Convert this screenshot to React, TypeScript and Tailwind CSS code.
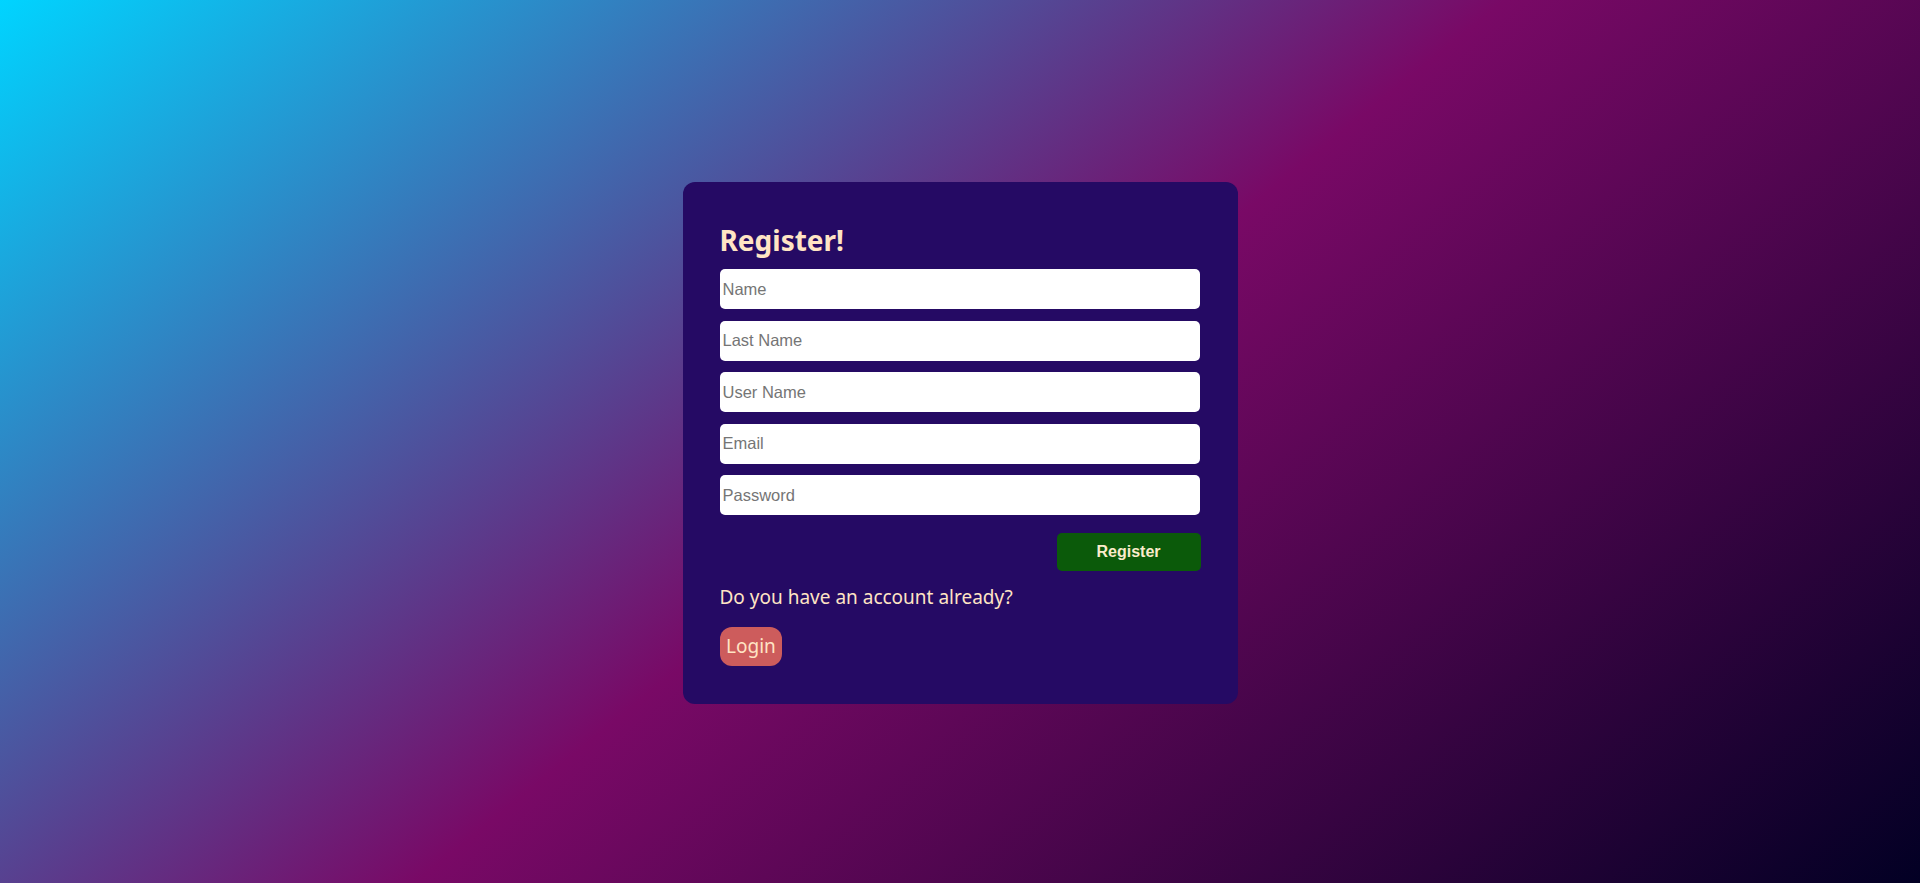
import { useState } from "react";

type Field = {
  name: string;
  placeholder: string;
  type: string;
};

const fields: Field[] = [
  { name: "name", placeholder: "Name", type: "text" },
  { name: "lastName", placeholder: "Last Name", type: "text" },
  { name: "userName", placeholder: "User Name", type: "text" },
  { name: "email", placeholder: "Email", type: "email" },
  { name: "password", placeholder: "Password", type: "password" },
];

const App = () => {
  const [values, setValues] = useState<Record<string, string>>({});

  return (
    <div className="flex min-h-screen w-full items-center justify-center bg-[linear-gradient(141deg,#00d4ff_0%,#790966_50%,#020024_100%)] pt-[3px] font-['Segoe_UI','Noto_Sans',sans-serif]">
      <div className="w-[555px] rounded-xl bg-[#250a64] px-[37px] pt-[40px] pb-[38px]">
        <h1 className="mb-[11px] text-[28px] leading-[36px] font-bold text-[#ffe4c4]">
          Register!
        </h1>
        <form className="flex flex-col" onSubmit={(e) => e.preventDefault()}>
          <div className="flex flex-col gap-[11.5px]">
            {fields.map((f) => (
              <input
                key={f.name}
                type={f.type}
                placeholder={f.placeholder}
                value={values[f.name] ?? ""}
                onChange={(e) =>
                  setValues({ ...values, [f.name]: e.target.value })
                }
                className="h-10 w-[480px] rounded-[5px] bg-white pl-[3px] font-['Liberation_Sans',Arial,sans-serif] text-[16.5px] text-black outline-none placeholder:text-[#757575]"
              />
            ))}
          </div>
          <div className="mt-[18px] flex justify-end">
            <button
              type="submit"
              className="h-[38px] w-[144px] rounded-[5px] bg-[#0b5a0a] font-['Liberation_Sans',Arial,sans-serif] text-[16px] font-bold text-[#fbeccb]"
            >
              Register
            </button>
          </div>
        </form>
        <p className="mt-[12px] text-[19px] leading-[28px] text-[#ffe4c4]">
          Do you have an account already?
        </p>
        <button className="mt-[16px] h-[39px] rounded-[12px] bg-[#cd5c5c] px-[6.5px] text-[19px] text-[#ffe4c4]">
          Login
        </button>
      </div>
    </div>
  );
};

export default App;
